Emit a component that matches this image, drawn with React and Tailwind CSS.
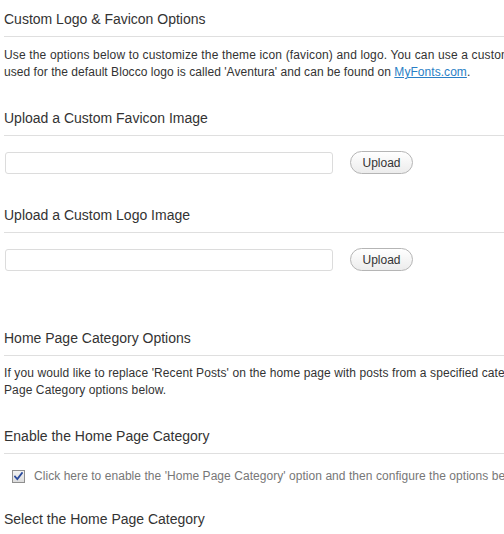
import React from "react";

function Heading({ children, className = "" }) {
  return (
    <div
      className={`text-[14px] leading-[20px] text-[#333] pb-[7px] border-b border-[#dfdfdf] whitespace-nowrap ${className}`}
    >
      {children}
    </div>
  );
}

function UploadRow({ className = "" }) {
  return (
    <div className={`flex items-center ${className}`}>
      <input
        type="text"
        className="ml-px w-[328px] h-[22px] border border-[#dcdcdc] rounded-[3px] bg-white outline-none"
      />
      <button className="ml-[17px] h-[23px] w-[63px] rounded-full border border-[#b5b5b5] bg-gradient-to-b from-white to-[#ececec] text-[12px] leading-[20px] text-[#333]">
        Upload
      </button>
    </div>
  );
}

export default function App() {
  return (
    <div
      className="w-[504px] h-[534px] overflow-hidden bg-white"
      style={{ fontFamily: '"Liberation Sans", Arial, sans-serif' }}
    >
      <div className="w-[640px] pl-1 pt-[9px]">
        <Heading>Custom Logo &amp; Favicon Options</Heading>
        <div className="mt-[10px] text-[12px] leading-[17px] text-[#333] whitespace-nowrap tracking-[0.15px]">
          <div>
            Use the options below to customize the theme icon (favicon) and logo. You can use a custom font for your logo. The font
          </div>
          <div className="tracking-[0.05px]">
            used for the default Blocco logo is called 'Aventura' and can be found on{" "}
            <a href="#" className="text-[#2a7fc6] underline">
              MyFonts.com
            </a>
            .
          </div>
        </div>

        <Heading className="mt-[27px]">Upload a Custom Favicon Image</Heading>
        <UploadRow className="mt-[15px]" />

        <Heading className="mt-[31px]">Upload a Custom Logo Image</Heading>
        <UploadRow className="mt-[15px]" />

        <Heading className="mt-[57px]">Home Page Category Options</Heading>
        <div className="mt-[9px] text-[12px] leading-[17px] text-[#333] whitespace-nowrap tracking-[0.1px]">
          <div>
            If you would like to replace 'Recent Posts' on the home page with posts from a specified category, enable and configure the Home
          </div>
          <div>Page Category options below.</div>
        </div>

        <Heading className="mt-[27px]">Enable the Home Page Category</Heading>
        <div className="mt-[14px] flex items-center h-[17px] whitespace-nowrap">
          <span className="ml-[8px] w-[13px] h-[13px] border border-[#8f8f8f] bg-gradient-to-b from-[#f2f2f2] to-[#dcdcdc] flex items-center justify-center">
            <svg width="9" height="9" viewBox="0 0 9 9">
              <path
                d="M1 4.5 L3.3 7 L8 1"
                fill="none"
                stroke="#2a4a9c"
                strokeWidth="1.8"
                strokeLinecap="square"
              />
            </svg>
          </span>
          <span className="ml-[9px] text-[12px] leading-[17px] text-[#777] tracking-[0.05px]">
            Click here to enable the 'Home Page Category' option and then configure the options below.
          </span>
        </div>

        <Heading className="mt-[24px]">Select the Home Page Category</Heading>
      </div>
    </div>
  );
}
